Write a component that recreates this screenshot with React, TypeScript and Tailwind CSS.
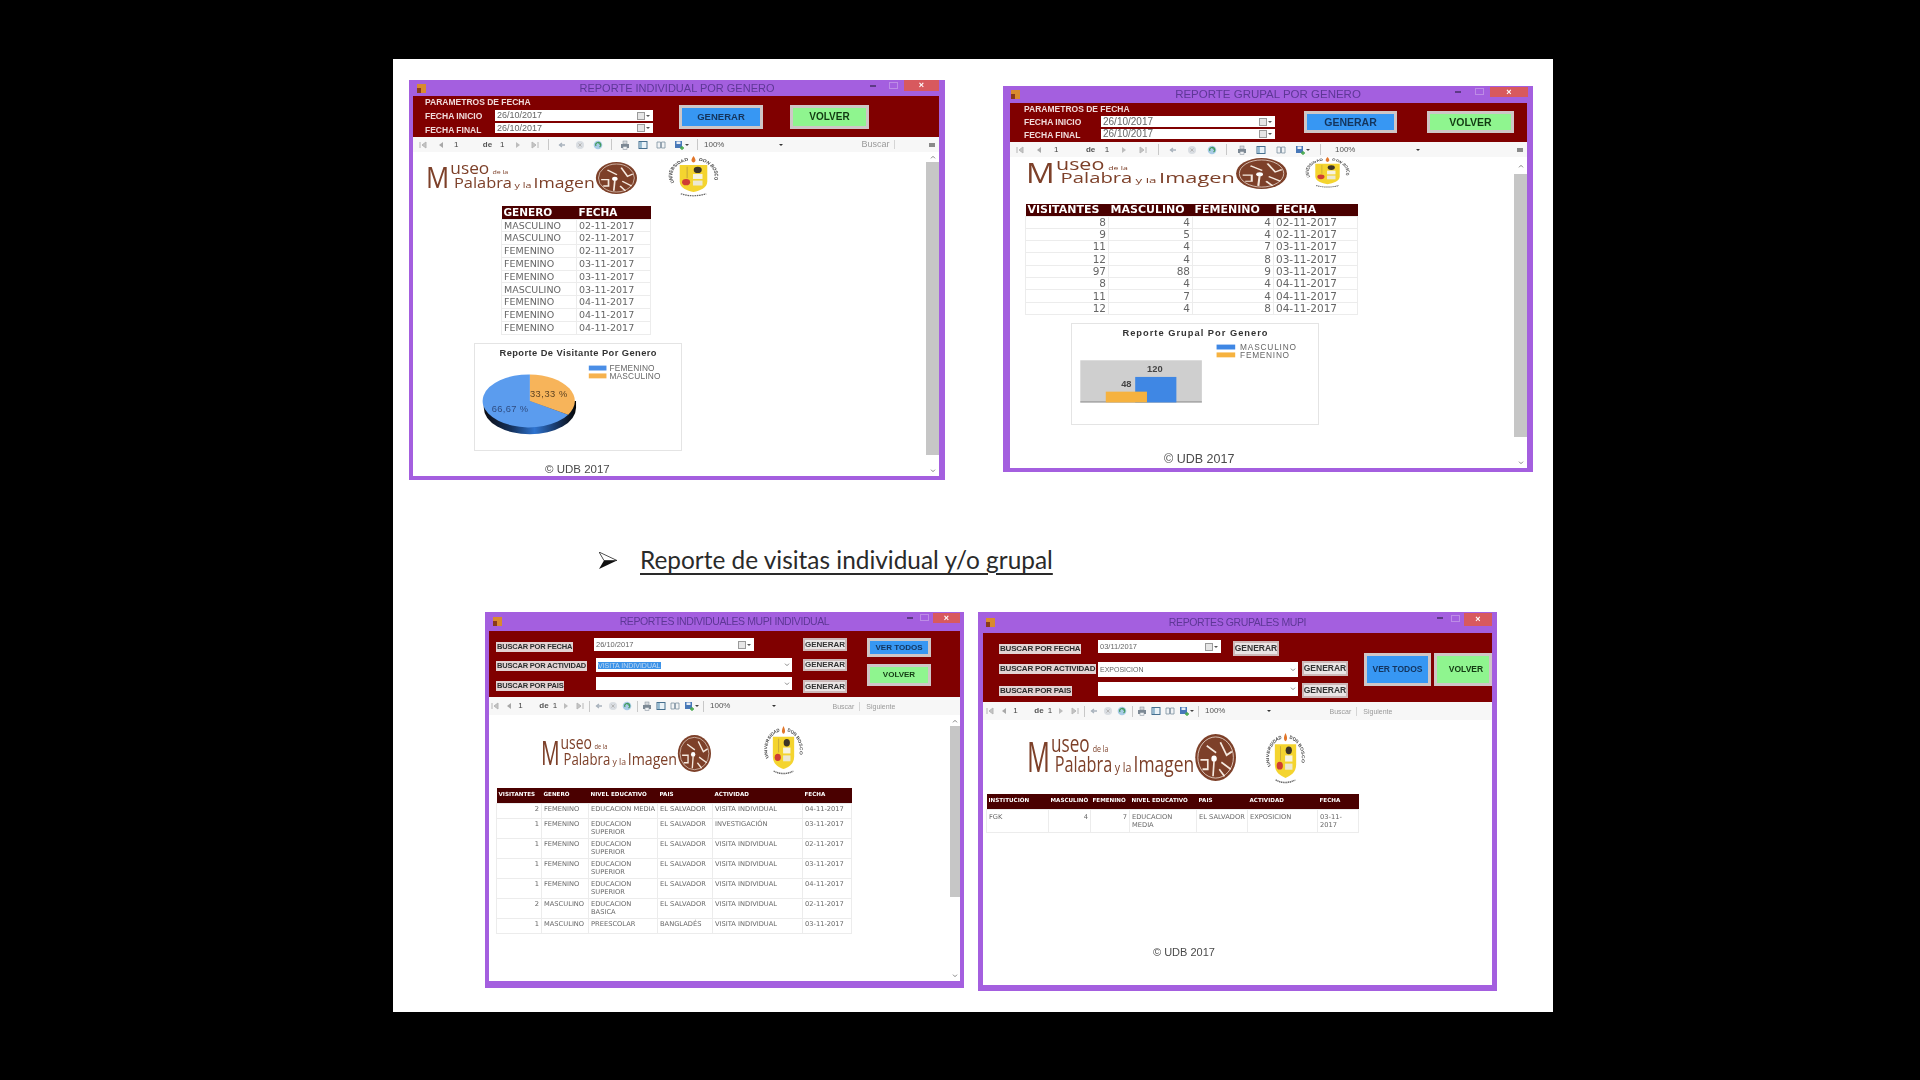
import React from "react";

const SANS = "Liberation Sans, sans-serif";
const OPEN = "Open Sans, sans-serif";

function Logo({ cls }: { cls: string }) {
  const c = "#7d4029";
  return (
    <svg viewBox="0 0 200 40" preserveAspectRatio="none" className={`block shrink-0 ${cls}`}>
      <text x="0" y="32" fontFamily={OPEN} fontSize="36" fill={c} textLength="22" lengthAdjust="spacingAndGlyphs">M</text>
      <text x="23" y="15" fontFamily={OPEN} fontSize="20" fill={c} textLength="37" lengthAdjust="spacingAndGlyphs">useo</text>
      <text x="63" y="15" fontFamily={OPEN} fontSize="7" fill={c} textLength="15" lengthAdjust="spacingAndGlyphs">de la</text>
      <text x="26.500" y="32" fontFamily={OPEN} fontSize="18" fill={c} textLength="55" lengthAdjust="spacingAndGlyphs">Palabra</text>
      <text x="84" y="32" fontFamily={OPEN} fontSize="10" fill={c} textLength="16" lengthAdjust="spacingAndGlyphs">y la</text>
      <text x="102" y="32" fontFamily={OPEN} fontSize="18" fill={c} textLength="58" lengthAdjust="spacingAndGlyphs">Imagen</text>
      <ellipse cx="180.500" cy="20" rx="19.500" ry="20" fill={c} />
      <ellipse cx="180.500" cy="20" rx="17" ry="17.500" fill="none" stroke="#f3e6dc" strokeWidth="0.7" />
      <circle cx="179" cy="21" r="2.6" fill="#fff" />
      <path d="M179 23 L178 36 M166 22 h7 v8 h-5 M172 10 l9 6 M185 7 l6 11 l5 -3 M186 24 l9 6 M184 30 l5 6" stroke="#f5e9df" strokeWidth="1.6" fill="none" />
    </svg>
  );
}

function Seal({ cls, id }: { cls: string; id: string }) {
  return (
    <svg viewBox="0 0 50 50" preserveAspectRatio="none" className={`block shrink-0 ${cls}`}>
      <defs>
        <path id={id} d="M7 32.300 A20 19 0 1 1 43 32.300" fill="none" />
      </defs>
      <text fontFamily={SANS} fontSize="5" fill="#444" fontWeight="700">
        <textPath href={`#${id}`} startOffset="0%">UNIVERSIDAD</textPath>
      </text>
      <text fontFamily={SANS} fontSize="5" fill="#444" fontWeight="700">
        <textPath href={`#${id}`} startOffset="56%">DON BOSCO</textPath>
      </text>
      <path d="M25 0 C22 5 23 7 25 8 C27 7 28 5 25 0Z" fill="#e2762a" />
      <path d="M12 11 H38 V31 C38 39 31 42 25 44 C19 42 12 39 12 31Z" fill="#f4d42f" />
      <circle cx="29" cy="17" r="3.8" fill="#3c3428" />
      <rect x="24.500" y="22" width="9" height="6" fill="#f6f3e2" />
      <rect x="24.500" y="30" width="9" height="6" fill="#ece8d2" />
      <circle cx="18" cy="32" r="3.8" fill="#cf3d34" />
      <path d="M19 13 V27" stroke="#c6a73a" strokeWidth="1" />
      <path d="M13 46 Q25 51 37 46" stroke="#666" strokeWidth="1.5" strokeDasharray="1.5 .7" fill="none" />
    </svg>
  );
}

function Ic({ children }: { children: React.ReactNode }) {
  return (
    <svg viewBox="0 0 10 10" className="block h-[10px] w-[10px] shrink-0">
      {children}
    </svg>
  );
}

const Sep = () => <div className="h-[11px] w-px shrink-0 bg-[#c8c8c8]" />;

function Toolbar({ cls, mid, end, buscarCls, siguiente, corner }: { cls: string; mid: string; end: string; buscarCls?: string; siguiente?: boolean; corner?: boolean }) {
  return (
    <div className="flex h-full items-center bg-[#f7f7f7]">
      <div className={`flex items-center justify-between ${cls}`}>
        <Ic><path d="M2 2v6M8 2L4 5l4 3z" stroke="#b5b5b5" fill="#c4c4c4" /></Ic>
        <Ic><path d="M7 2L3 5l4 3z" fill="#a8a8a8" /></Ic>
        <span className="w-[6px] text-[8px] leading-none text-[#444]">1</span>
        <div className="h-[10px] w-[7px] shrink-0" />
        <span className="text-[8px] leading-none font-bold text-[#555]">de</span>
        <span className="text-[8px] leading-none text-[#444]">1</span>
        <Ic><path d="M3 2l4 3-4 3z" fill="#bdbdbd" /></Ic>
        <Ic><path d="M8 2v6M2 2l4 3-4 3z" stroke="#b8b8b8" fill="#c4c4c4" /></Ic>
        <Sep />
        <Ic><path d="M2 5h6M5 3L2.500 5 5 7" stroke="#a9b3bd" strokeWidth="1.3" fill="none" /></Ic>
        <Ic><circle cx="5" cy="5" r="4" fill="#d9dde2" /><path d="M3.500 3.500l3 3m0-3l-3 3" stroke="#b5b5b5" /></Ic>
        <Ic><circle cx="5" cy="5" r="4.300" fill="#a8cbe6" /><path d="M3 6a2.500 2.500 0 1 1 3.500 1M5 3h2v2" stroke="#3f9a5a" strokeWidth="1.100" fill="none" /></Ic>
        <Sep />
        <Ic><rect x="1" y="4" width="8" height="4" fill="#7c8894" /><rect x="3" y="1" width="4" height="3" fill="#d7dade" stroke="#7f8a95" strokeWidth=".5" /><rect x="3" y="6.500" width="4" height="3" fill="#eef0f2" stroke="#7f8a95" strokeWidth=".5" /></Ic>
        <Ic><rect x="1" y="1.500" width="8" height="7" fill="#eaf2f7" stroke="#47708f" /><rect x="1.500" y="2" width="2.400" height="6" fill="#93b8cf" /></Ic>
        <Ic><path d="M1 2h3.500v6H1zM5.500 2H9v6H5.500z" fill="#f1f3f5" stroke="#7c8fa0" strokeWidth=".8" /></Ic>
        <div className="flex shrink-0 items-center">
          <Ic><rect x="1" y="1" width="7" height="7" fill="#4878b8" /><rect x="2.500" y="1.500" width="4" height="2.500" fill="#e8eef5" /><path d="M6 8h4M8 6v4" stroke="#46a84c" strokeWidth="1.300" /></Ic>
          <span className="ml-px h-0 w-0 border-x-[2px] border-t-[2px] border-x-transparent border-t-[#444]" />
        </div>
        <Sep />
      </div>
      <div className={`flex items-center ${mid}`}>
        <span className="text-[8px] leading-none text-[#555]">100%</span>
        <span className={`h-0 w-0 border-x-[2px] border-t-[2px] border-x-transparent border-t-[#333] ${end}`} />
      </div>
      {buscarCls ? <span className={`leading-none text-[#9a9a9a] ${buscarCls}`}>Buscar</span> : null}
      {buscarCls ? <span className="ml-[5px] h-[9px] w-px bg-[#d5d5d5]" /> : null}
      {siguiente ? <span className="ml-[6px] text-[7px] leading-none text-[#9a9a9a]">Siguiente</span> : null}
      {corner ? <span className="mr-[4px] ml-auto h-[4px] w-[6px] bg-[#8a8a8a]" /> : null}
    </div>
  );
}

function Chevron({ up }: { up?: boolean }) {
  return (
    <svg viewBox="0 0 8 6" className="block h-[4px] w-[6px]">
      <path d={up ? "M1 5l3-3 3 3" : "M1 1l3 3 3-3"} stroke="#666" strokeWidth="1.200" fill="none" />
    </svg>
  );
}

function Scroll({ cls, top, thumb }: { cls: string; top: string; thumb: string }) {
  return (
    <div className={`flex shrink-0 flex-col items-center bg-white ${cls}`}>
      <div className={`flex w-full items-center justify-center ${top}`}><Chevron up /></div>
      <div className={`w-full bg-[#c6c6c6] ${thumb}`} />
      <div className="flex w-full flex-1 items-end justify-center pb-[3px]"><Chevron /></div>
    </div>
  );
}

function TitleBar({ title, cls, textCls, closeCls, ctlCls }: { title: string; cls: string; textCls: string; closeCls: string; ctlCls: string }) {
  return (
    <div className={`grid shrink-0 grid-cols-[1fr_auto_1fr] bg-[#a45fdf] ${cls}`}>
      <div className="flex items-center pl-[8px]">
        <div className="flex h-[9px] w-[9px] items-end bg-[#d98a2e]">
          <div className="h-[5px] w-[4px] bg-[#8a3a1a]" />
        </div>
      </div>
      <div className={`self-center leading-none whitespace-nowrap text-[#5e3796] ${textCls}`}>{title}</div>
      <div className="flex items-start justify-end">
        <div className={`flex items-center ${ctlCls}`}>
          <div className="h-[2px] w-[6px] bg-[#5d3a86]" />
          <div className="h-[7px] w-[9px] border border-[#bd8ce6]" />
        </div>
        <div className={`flex items-center justify-center bg-[#d8595e] text-[9px] leading-none font-bold text-white ${closeCls}`}>×</div>
      </div>
    </div>
  );
}

function Field({ value, cls, combo, selected, textCls }: { value?: string; cls: string; combo?: boolean; selected?: boolean; textCls: string }) {
  return (
    <div className={`flex items-center justify-between bg-white pl-[2px] ${cls}`}>
      <span className={`leading-none whitespace-nowrap ${textCls} ${selected ? "bg-[#3d93e8] text-[#bcd8f4]" : "text-[#666]"}`}>{value}</span>
      {combo ? (
        <svg viewBox="0 0 8 6" className="mr-[2px] block h-[4px] w-[6px]"><path d="M1 1l3 3 3-3" stroke="#777" strokeWidth="1.300" fill="none" /></svg>
      ) : (
        <span className="mr-[3px] flex items-center">
          <span className="h-[8px] w-[8px] border border-[#9a9a9a] bg-[#e6e6e6]" />
          <span className="ml-[1px] h-0 w-0 border-x-[2px] border-t-[2px] border-x-transparent border-t-[#555]" />
        </span>
      )}
    </div>
  );
}

function Btn({ label, cls }: { label: string; cls: string }) {
  return <div className={`flex shrink-0 items-center justify-center leading-none font-bold ${cls}`}>{label}</div>;
}

const blueBtn = "border-[3px] border-[#cfc6c6] bg-[#3797f3] text-[#14345c]";
const greenBtn = "border-[3px] border-[#cfc6c6] bg-[#8ff58f] text-[#123a12]";
const grayBtn = "border-[2px] border-[#cdb9b9] bg-[#e9e4e4] text-[#333]";

const Lab = ({ t, cls }: { t: string; cls: string }) => (
  <div className={`w-fit whitespace-nowrap bg-[#e3d3d3] px-[1px] font-bold leading-none text-[#2c2c2c] ${cls}`}>{t}</div>
);

function RT({ cols, head, rows, cls, headCls, rowCls, cellCls, right }: {
  cols: string[]; head: string[]; rows: string[][]; cls: string; headCls: string; rowCls: string; cellCls: string; right: number[];
}) {
  return (
    <table className={`table-fixed border-collapse font-['DejaVu_Sans',sans-serif] ${cls}`}>
      <colgroup>{cols.map((c, i) => <col key={i} className={c} />)}</colgroup>
      <thead>
        <tr className={`bg-[#4a0000] text-white ${headCls}`}>
          {head.map((h, i) => <th key={i} className="px-[2px] text-left font-bold whitespace-nowrap">{h}</th>)}
        </tr>
      </thead>
      <tbody className="text-[#666]">
        {rows.map((r, i) => (
          <tr key={i} className={rowCls}>
            {r.map((v, j) => (
              <td key={j} className={`border border-[#ececec] px-[2px] whitespace-pre ${cellCls} ${right.includes(j) ? "text-right" : "text-left"}`}>{v}</td>
            ))}
          </tr>
        ))}
      </tbody>
    </table>
  );
}

function PieChart() {
  return (
    <svg viewBox="0 0 208 108" className="block h-[108px] w-[208px] shrink-0 border border-[#e4e4e4] bg-white">
      <defs>
        <linearGradient id="base" x1="0" x2="1" y1="0" y2="0">
          <stop offset="0" stopColor="#0c0c12" />
          <stop offset=".3" stopColor="#14315c" />
          <stop offset=".55" stopColor="#2f74d0" />
          <stop offset=".8" stopColor="#173562" />
          <stop offset="1" stopColor="#050505" />
        </linearGradient>
      </defs>
      <text x="104" y="12" textAnchor="middle" fontFamily={SANS} fontSize="9.500" fontWeight="700" fill="#333" textLength="160">Reporte De Visitante Por Genero</text>
      <rect x="115" y="22" width="18" height="5" fill="#4a8ee6" />
      <rect x="115" y="30" width="18" height="5" fill="#f6b24e" />
      <text x="136" y="27.500" fontFamily={SANS} fontSize="8.500" fill="#666" textLength="46">FEMENINO</text>
      <text x="136" y="35.500" fontFamily={SANS} fontSize="8.500" fill="#666" textLength="52">MASCULINO</text>
      <path d="M8 58 v7 a47 27 0 0 0 94 0 v-7z" fill="url(#base)" />
      <path d="M55 58 V31 A47 27 0 1 0 94 72 Z" fill="#5b9cee" />
      <path d="M55 58 V31 A47 27 0 0 1 94 72 Z" fill="#f7b45a" />
      <text x="55" y="54.500" fontFamily={SANS} fontSize="9.500" fill="#5a4020" textLength="38">33,33 %</text>
      <text x="16" y="69" fontFamily={SANS} fontSize="9.500" fill="#2f4c80" textLength="37">66,67 %</text>
    </svg>
  );
}

function BarChart() {
  return (
    <svg viewBox="0 0 248 102" className="block h-[102px] w-[248px] shrink-0 border border-[#e4e4e4] bg-white">
      <text x="124" y="12" textAnchor="middle" fontFamily={SANS} fontSize="9.500" fontWeight="700" fill="#333" textLength="148">Reporte Grupal Por Genero</text>
      <rect x="146" y="21" width="19" height="5" fill="#3f87e4" />
      <rect x="146" y="29" width="19" height="5" fill="#f6b23f" />
      <text x="170" y="26.500" fontFamily={SANS} fontSize="8.500" fill="#666" textLength="57">MASCULINO</text>
      <text x="170" y="34.500" fontFamily={SANS} fontSize="8.500" fill="#666" textLength="50">FEMENINO</text>
      <rect x="7" y="37" width="124" height="43" fill="#cfcfcf" />
      <rect x="7" y="79" width="124" height="1" fill="#8e8e8e" />
      <rect x="63" y="54" width="42" height="26" fill="#3f87e4" />
      <rect x="33" y="69" width="42" height="11" fill="#f6b23f" />
      <text x="83" y="49" textAnchor="middle" fontFamily={SANS} fontSize="9.500" fontWeight="700" fill="#444">120</text>
      <text x="54" y="64" textAnchor="middle" fontFamily={SANS} fontSize="9.500" fontWeight="700" fill="#444">48</text>
    </svg>
  );
}

const copyright = "leading-none whitespace-nowrap text-[#4a4a4a]";

function Win1() {
  const rows = [["MASCULINO","02-11-2017"],["MASCULINO","02-11-2017"],["FEMENINO","02-11-2017"],["FEMENINO","03-11-2017"],["FEMENINO","03-11-2017"],["MASCULINO","03-11-2017"],["FEMENINO","04-11-2017"],["FEMENINO","04-11-2017"],["FEMENINO","04-11-2017"]];
  return (
    <div className="flex h-[400px] w-[536px] shrink-0 flex-col bg-[#a45fdf] blur-[0.6px]">
      <TitleBar title="REPORTE INDIVIDUAL POR GENERO" cls="h-[16px]" textCls="text-[11px]" closeCls="h-[11px] w-[35px] mr-[6px]" ctlCls="mr-[6px] h-[11px] gap-[13px]" />
      <div className="flex min-h-0 flex-1 flex-col pr-[6px] pb-[4px] pl-[4px]">
        <div className="flex h-[41px] shrink-0 bg-[#800000] pl-[12px] text-[8.500px] font-bold text-[#f0dada]">
          <div className="w-[70px] shrink-0 leading-none">
            <div className="flex h-[13px] items-center whitespace-nowrap">PARAMETROS DE FECHA</div>
            <div className="flex h-[14px] items-center whitespace-nowrap">FECHA INICIO</div>
            <div className="flex h-[14px] items-center whitespace-nowrap">FECHA FINAL</div>
          </div>
          <div className="flex w-[158px] shrink-0 flex-col gap-[2px] pt-[14px] font-normal">
            <Field value="26/10/2017" textCls="text-[9px]" cls="h-[11px]" />
            <Field value="26/10/2017" textCls="text-[9px]" cls="h-[10px]" />
          </div>
          <Btn label="GENERAR" cls={`mt-[9px] ml-[26px] h-[24px] w-[84px] text-[9.500px] ${blueBtn}`} />
          <Btn label="VOLVER" cls={`mt-[9px] ml-[27px] h-[24px] w-[79px] text-[10px] ${greenBtn}`} />
        </div>
        <div className="h-[15px] shrink-0">
          <Toolbar cls="w-[280px] ml-[5px]" mid="ml-[6px]" end="ml-[55px]" buscarCls="ml-[78px] text-[9px]" corner />
        </div>
        <div className="flex min-h-0 flex-1 bg-white">
          <div className="min-w-0 flex-1">
            <div className="flex items-start pt-[4px]">
              <Logo cls="mt-[6px] ml-[13px] h-[32px] w-[211px]" />
              <Seal id="s1" cls="ml-[30px] h-[41px] w-[53px]" />
            </div>
            <div className="mt-[9px] ml-[88px]">
              <RT cols={["w-[75px]","w-[74px]"]} head={["GENERO","FECHA"]} rows={rows} cls="w-[149px]" headCls="h-[13px] text-[10.500px] leading-none" rowCls="h-[12.800px] text-[9.500px] leading-none" cellCls="py-0" right={[]} />
            </div>
            <div className="mt-[8px] ml-[61px]"><PieChart /></div>
            <div className={`mt-[13px] ml-[132px] text-[11.500px] ${copyright}`}>© UDB 2017</div>
          </div>
          <Scroll cls="w-[13px]" top="h-[10px]" thumb="h-[293px]" />
        </div>
      </div>
    </div>
  );
}

function Win2() {
  const rows = [["8","4","4","02-11-2017"],["9","5","4","02-11-2017"],["11","4","7","03-11-2017"],["12","4","8","03-11-2017"],["97","88","9","03-11-2017"],["8","4","4","04-11-2017"],["11","7","4","04-11-2017"],["12","4","8","04-11-2017"]];
  return (
    <div className="mt-[6px] ml-[58px] flex h-[386px] w-[530px] shrink-0 flex-col bg-[#a45fdf] blur-[0.6px]">
      <TitleBar title="REPORTE GRUPAL POR GENERO" cls="h-[17px]" textCls="text-[11.500px]" closeCls="mt-[1px] h-[10px] w-[38px] mr-[5px]" ctlCls="mr-[6px] h-[11px] gap-[14px]" />
      <div className="flex min-h-0 flex-1 flex-col pr-[6px] pb-[4px] pl-[7px]">
        <div className="flex h-[39px] shrink-0 bg-[#800000] pl-[14px] text-[8.500px] font-bold text-[#f0dada]">
          <div className="w-[77px] shrink-0 leading-none">
            <div className="flex h-[12px] items-center whitespace-nowrap">PARAMETROS DE FECHA</div>
            <div className="flex h-[14px] items-center whitespace-nowrap">FECHA INICIO</div>
            <div className="flex h-[13px] items-center whitespace-nowrap">FECHA FINAL</div>
          </div>
          <div className="flex w-[174px] shrink-0 flex-col gap-[2px] pt-[13px] font-normal">
            <Field value="26/10/2017" textCls="text-[10px]" cls="h-[11px]" />
            <Field value="26/10/2017" textCls="text-[10px]" cls="h-[10px]" />
          </div>
          <Btn label="GENERAR" cls={`mt-[8px] ml-[29px] h-[22px] w-[93px] text-[10.500px] ${blueBtn}`} />
          <Btn label="VOLVER" cls={`mt-[8px] ml-[30px] h-[22px] w-[87px] text-[10.500px] ${greenBtn}`} />
        </div>
        <div className="h-[15px] shrink-0">
          <Toolbar cls="w-[306px] ml-[5px]" mid="ml-[14px]" end="ml-[61px]" corner />
        </div>
        <div className="flex min-h-0 flex-1 bg-white">
          <div className="min-w-0 flex-1">
            <div className="flex items-start">
              <Logo cls="mt-[1px] ml-[16px] h-[31px] w-[261px]" />
              <Seal id="s2" cls="ml-[17px] h-[31px] w-[47px]" />
            </div>
            <div className="mt-[15px] ml-[15px]">
              <RT cols={["w-[83px]","w-[84px]","w-[81px]","w-[84px]"]} head={["VISITANTES","MASCULINO","FEMENINO","FECHA"]} rows={rows} cls="w-[332px]" headCls="h-[12px] text-[11px] leading-none" rowCls="h-[12.300px] text-[10.500px] leading-none" cellCls="py-0" right={[0,1,2]} />
            </div>
            <div className="mt-[8px] ml-[61px]"><BarChart /></div>
            <div className={`mt-[28px] ml-[154px] text-[12.500px] ${copyright}`}>© UDB 2017</div>
          </div>
          <Scroll cls="w-[13px]" top="h-[17px]" thumb="h-[263px]" />
        </div>
      </div>
    </div>
  );
}

function Win3() {
  const rows = [
    ["2","FEMENINO","EDUCACION MEDIA","EL SALVADOR","VISITA INDIVIDUAL","04-11-2017"],
    ["1","FEMENINO","EDUCACION\nSUPERIOR","EL SALVADOR","INVESTIGACIÓN","03-11-2017"],
    ["1","FEMENINO","EDUCACION\nSUPERIOR","EL SALVADOR","VISITA INDIVIDUAL","02-11-2017"],
    ["1","FEMENINO","EDUCACION\nSUPERIOR","EL SALVADOR","VISITA INDIVIDUAL","03-11-2017"],
    ["1","FEMENINO","EDUCACION\nSUPERIOR","EL SALVADOR","VISITA INDIVIDUAL","04-11-2017"],
    ["2","MASCULINO","EDUCACION\nBASICA","EL SALVADOR","VISITA INDIVIDUAL","02-11-2017"],
    ["1","MASCULINO","PREESCOLAR","BANGLADÉS","VISITA INDIVIDUAL","03-11-2017"],
  ];
  return (
    <div className="flex h-[376px] w-[479px] shrink-0 flex-col bg-[#a45fdf] blur-[0.6px]">
      <TitleBar title="REPORTES INDIVIDUALES MUPI INDIVIDUAL" cls="h-[19px]" textCls="text-[10.500px] tracking-[-0.4px]" closeCls="mt-[1px] h-[10px] w-[27px] mr-[4px]" ctlCls="mr-[4px] h-[11px] gap-[7px]" />
      <div className="flex min-h-0 flex-1 flex-col pr-[4px] pb-[7px] pl-[4px]">
        <div className="flex h-[66px] shrink-0 bg-[#800000] pl-[7px]">
          <div className="w-[100px] shrink-0 pt-[11px]">
            <Lab t="BUSCAR POR FECHA" cls="flex h-[10px] items-center text-[7.500px] tracking-[-0.2px]" />
            <Lab t="BUSCAR POR ACTIVIDAD" cls="mt-[9px] flex h-[10px] items-center text-[7.500px] tracking-[-0.2px]" />
            <Lab t="BUSCAR POR PAIS" cls="mt-[10px] flex h-[10px] items-center text-[7.500px] tracking-[-0.2px]" />
          </div>
          <div className="w-[196px] shrink-0 pt-[7px]">
            <Field value="26/10/2017" textCls="text-[7.500px]" cls="-ml-[2px] h-[13px] w-[160px]" />
            <Field value="VISITA INDIVIDUAL" textCls="text-[7px]" selected combo cls="mt-[7px] h-[14px]" />
            <Field textCls="text-[7px]" combo cls="mt-[5px] h-[13px]" />
          </div>
          <div className="ml-[11px] w-[44px] shrink-0 pt-[7px]">
            <Btn label="GENERAR" cls={`h-[13px] text-[8px] ${grayBtn}`} />
            <Btn label="GENERAR" cls={`mt-[8px] h-[12px] text-[8px] ${grayBtn}`} />
            <Btn label="GENERAR" cls={`mt-[9px] h-[13px] text-[8px] ${grayBtn}`} />
          </div>
          <div className="ml-[20px] w-[64px] shrink-0 pt-[7px]">
            <Btn label="VER TODOS" cls={`h-[19px] border-[2px] text-[8px] ${blueBtn}`} />
            <Btn label="VOLVER" cls={`mt-[7px] h-[22px] border-[2px] text-[8px] ${greenBtn}`} />
          </div>
        </div>
        <div className="h-[18px] shrink-0">
          <Toolbar cls="w-[214px] ml-[1px]" mid="ml-[6px]" end="ml-[42px]" buscarCls="ml-[56px] text-[7px]" siguiente />
        </div>
        <div className="flex min-h-0 flex-1 bg-white">
          <div className="min-w-0 flex-1">
            <div className="flex items-start">
              <Logo cls="mt-[20px] ml-[52px] h-[37px] w-[170px]" />
              <Seal id="s3" cls="mt-[11px] ml-[52px] h-[49px] w-[41px]" />
            </div>
            <div className="mt-[13px] ml-[7px]">
              <RT cols={["w-[45px]","w-[47px]","w-[69px]","w-[55px]","w-[90px]","w-[49px]"]} head={["VISITANTES","GENERO","NIVEL EDUCATIVO","PAIS","ACTIVIDAD","FECHA"]} rows={rows} cls="w-[355px]" headCls="h-[15px] text-[5.600px] leading-none" rowCls="h-[15px] text-[6.700px] leading-[8px]" cellCls="py-[1.500px] align-top" right={[0]} />
            </div>
          </div>
          <Scroll cls="w-[10px]" top="h-[11px]" thumb="h-[171px]" />
        </div>
      </div>
    </div>
  );
}

function Win4() {
  const rows = [["FGK","4","7","EDUCACION\nMEDIA","EL SALVADOR","EXPOSICION","03-11-\n2017"]];
  return (
    <div className="ml-[14px] flex h-[379px] w-[519px] shrink-0 flex-col bg-[#a45fdf] blur-[0.6px]">
      <TitleBar title="REPORTES GRUPALES MUPI" cls="h-[21px]" textCls="text-[10.500px] tracking-[-0.4px]" closeCls="mt-[1px] h-[13px] w-[28px] mr-[5px]" ctlCls="mr-[4px] h-[12px] gap-[8px]" />
      <div className="flex min-h-0 flex-1 flex-col pr-[5px] pb-[6px] pl-[5px]">
        <div className="flex h-[69px] shrink-0 overflow-hidden bg-[#800000] pl-[16px]">
          <div className="w-[99px] shrink-0 pt-[11px]">
            <Lab t="BUSCAR POR FECHA" cls="flex h-[10px] items-center text-[8px] tracking-[-0.2px]" />
            <Lab t="BUSCAR POR ACTIVIDAD" cls="mt-[10px] flex h-[10px] items-center text-[8px] tracking-[-0.2px]" />
            <Lab t="BUSCAR POR PAIS" cls="mt-[12px] flex h-[10px] items-center text-[8px] tracking-[-0.2px]" />
          </div>
          <div className="w-[250px] shrink-0 pt-[7px]">
            <div className="flex h-[16px] items-start">
              <Field value="03/11/2017" textCls="text-[7.500px]" cls="h-[13px] w-[123px]" />
              <Btn label="GENERAR" cls={`mt-[1px] ml-[12px] h-[15px] w-[46px] text-[8.500px] ${grayBtn}`} />
            </div>
            <div className="mt-[5px] flex h-[16px] items-start">
              <Field value="EXPOSICION" textCls="text-[7px]" combo cls="mt-[1px] h-[15px] w-[200px]" />
              <Btn label="GENERAR" cls={`ml-[4px] h-[15px] w-[46px] text-[8.500px] ${grayBtn}`} />
            </div>
            <div className="mt-[5px] flex h-[16px] items-start">
              <Field textCls="text-[7px]" combo cls="h-[14px] w-[200px]" />
              <Btn label="GENERAR" cls={`mt-[1px] ml-[4px] h-[15px] w-[46px] text-[8.500px] ${grayBtn}`} />
            </div>
          </div>
          <Btn label="VER TODOS" cls={`mt-[20px] ml-[16px] h-[33px] w-[67px] text-[8.500px] ${blueBtn}`} />
          <Btn label="VOLVER" cls={`mt-[20px] ml-[3px] h-[33px] w-[58px] pl-[6px] text-[8.500px] ${greenBtn}`} />
        </div>
        <div className="h-[18px] shrink-0">
          <Toolbar cls="w-[214px] ml-[2px]" mid="ml-[6px]" end="ml-[42px]" buscarCls="ml-[58px] text-[7px]" siguiente />
        </div>
        <div className="min-h-0 flex-1 bg-white">
          <div className="flex items-start">
            <Logo cls="mt-[14px] ml-[44px] h-[47px] w-[209px]" />
            <Seal id="s4" cls="mt-[13px] ml-[29px] h-[51px] w-[41px]" />
          </div>
          <div className="mt-[10px] ml-[3px]">
            <RT cols={["w-[62px]","w-[42px]","w-[39px]","w-[67px]","w-[51px]","w-[70px]","w-[41px]"]} head={["INSTITUCION","MASCULINO","FEMENINO","NIVEL EDUCATIVO","PAIS","ACTIVIDAD","FECHA"]} rows={rows} cls="w-[372px]" headCls="h-[15px] text-[5.600px] leading-none" rowCls="h-[22px] text-[6.700px] leading-[8px]" cellCls="py-[3px] align-top" right={[1,2]} />
          </div>
          <div className={`mt-[114px] ml-[170px] text-[11px] ${copyright}`}>© UDB 2017</div>
        </div>
      </div>
    </div>
  );
}

export default function App() {
  return (
    <div className="h-[1080px] w-[1920px] overflow-hidden bg-black pt-[59px] pl-[393px] font-['Liberation_Sans',sans-serif]">
      <div className="h-[953px] w-[1160px] bg-white">
        <div className="flex items-start pt-[21px] pl-[16px]">
          <Win1 />
          <Win2 />
        </div>
        <div className="mt-[64px] flex h-[32px] items-center pl-[206px] font-['Lato',sans-serif]">
          <svg viewBox="0 0 18 17" className="block h-[17px] w-[18px] shrink-0">
            <path d="M0 0 L18 8.500 L0 17 L5 8.500Z" fill="#111" />
            <path d="M0 0 L18 8.500 L5 8.500Z" fill="#fff" stroke="#222" strokeWidth="0.7" />
          </svg>
          <h2 className="ml-[23px] text-[24.400px] leading-none font-normal whitespace-nowrap text-[#2a2a2a] underline decoration-[1.5px] underline-offset-[4px]">Reporte de visitas individual y/o grupal</h2>
        </div>
        <div className="mt-[36px] flex items-start pl-[92px]">
          <Win3 />
          <Win4 />
        </div>
      </div>
    </div>
  );
}
